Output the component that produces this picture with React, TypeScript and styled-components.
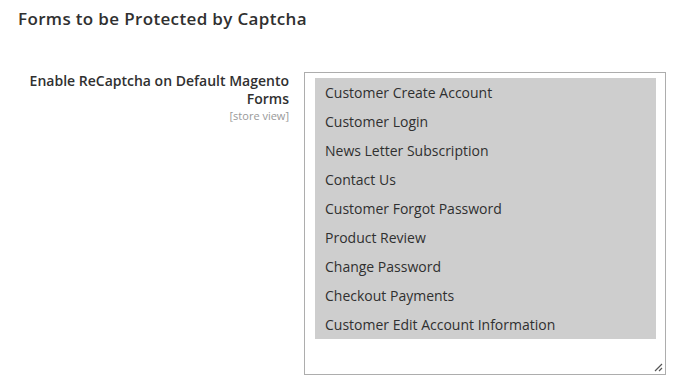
import React from "react"
import styled, { createGlobalStyle } from "styled-components"

const GlobalStyle = createGlobalStyle`
  body {
    margin: 0;
    background: #fff;
    font-family: "Open Sans", "Liberation Sans", sans-serif;
    color: #303030;
  }
`

const Wrapper = styled.div`
  width: 685px;
  height: 388px;
  overflow: hidden;
`

const Legend = styled.h2`
  margin: 0;
  padding: 7px 0 0 18px;
  font-size: 17px;
  font-weight: 600;
  line-height: 24px;
  letter-spacing: 0.35px;
  color: #303030;
`

const FieldRow = styled.div`
  display: grid;
  grid-template-columns: 290px 362px;
  column-gap: 14px;
  padding-top: 41px;
`

const Label = styled.div`
  text-align: right;
`

const LabelText = styled.div`
  font-size: 14px;
  font-weight: 600;
  line-height: 18px;
  padding-left: 28px;
  padding-right: 1px;
`

const Scope = styled.div`
  font-size: 11px;
  line-height: 13px;
  margin-top: 1px;
  color: #999;
  padding-right: 1px;
`

const MultiSelect = styled.div`
  box-sizing: border-box;
  height: 303px;
  border: 1px solid #adadad;
  padding: 5px 9px 0 10px;
  position: relative;
`

const Option = styled.div<{ selected?: boolean }>`
  height: 29px;
  line-height: 29px;
  padding-left: 10px;
  font-size: 14px;
  background: ${(p) => (p.selected ? "#cecece" : "transparent")};
  color: #303030;
  white-space: nowrap;
`

const Grip = styled.svg`
  position: absolute;
  right: 2px;
  bottom: 2px;
`

const forms = [
  "Customer Create Account",
  "Customer Login",
  "News Letter Subscription",
  "Contact Us",
  "Customer Forgot Password",
  "Product Review",
  "Change Password",
  "Checkout Payments",
  "Customer Edit Account Information",
]

const App = (): JSX.Element => {
  return (
    <Wrapper>
      <GlobalStyle />
      <Legend>Forms to be Protected by Captcha</Legend>
      <FieldRow>
        <Label>
          <LabelText>Enable ReCaptcha on Default Magento Forms</LabelText>
          <Scope>[store view]</Scope>
        </Label>
        <MultiSelect>
          {forms.map((f) => (
            <Option key={f} selected>
              {f}
            </Option>
          ))}
          <Grip width="10" height="10" viewBox="0 0 10 10">
            <path d="M9 2 L2 9 M9 6 L6 9" stroke="#555" strokeWidth="1.2" fill="none" />
          </Grip>
        </MultiSelect>
      </FieldRow>
    </Wrapper>
  )
}

export default App
